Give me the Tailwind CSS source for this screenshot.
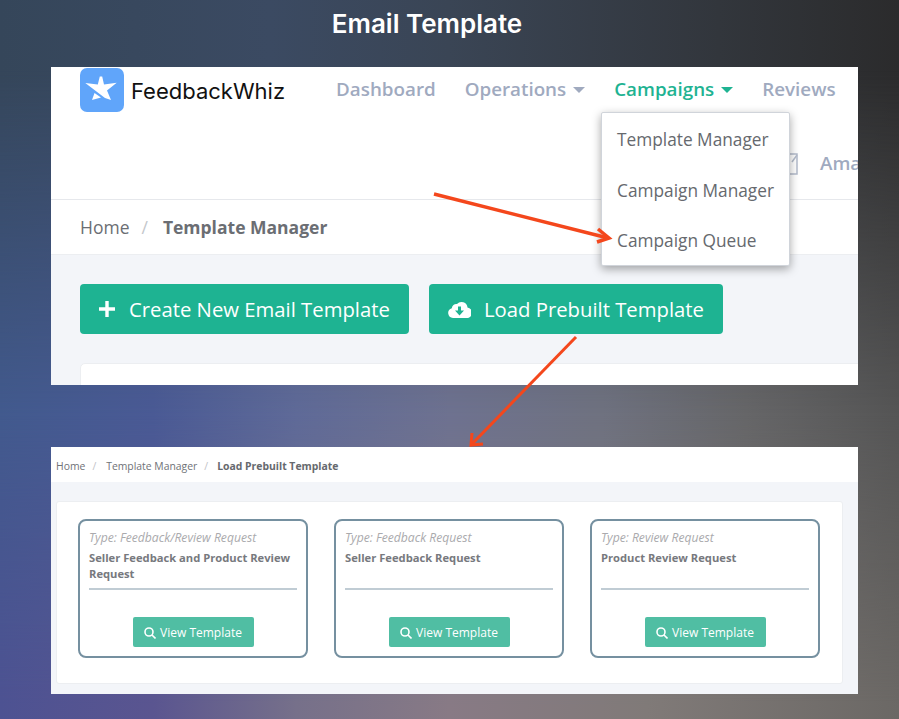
<!DOCTYPE html>
<html lang="en">
<head>
  <meta charset="UTF-8">
  <title>Email Template</title>
  <script src="https://cdn.jsdelivr.net/npm/@tailwindcss/browser@4"></script>
</head>
<body class="font-['Open_Sans',sans-serif]">
  <div class="relative w-[899px] h-[719px] overflow-hidden">
    <!-- slide background -->
    <div class="absolute inset-0 bg-[linear-gradient(90deg,#35465a_0%,#3b4a62_30%,#3a4555_50%,#32363c_80%,#2b2b2c_100%)]"></div>
    <div class="absolute inset-0 bg-[linear-gradient(90deg,#425a8e_0%,#4a5a95_17%,#5f6a98_33%,#6e7290_50%,#6f7280_67%,#666668_83%,#555555_100%)] [mask-image:linear-gradient(180deg,transparent_70px,#000_415px)]"></div>
    <div class="absolute inset-0 bg-[linear-gradient(90deg,#4d5292_0%,#5a5590_17%,#76708a_33%,#887a85_50%,#807a78_72%,#6b6865_100%)] [mask-image:linear-gradient(180deg,transparent_415px,#000_705px)]"></div>

    <div class="relative flex flex-col pl-[51px] w-[858px]">
      <h1 class="h-[67px] pb-[20px] pr-[55px] flex items-center justify-center font-['Inter',sans-serif] text-[26px] font-semibold text-white">Email Template</h1>

      <!-- first screenshot -->
      <div class="h-[318px] bg-white flex flex-col overflow-hidden">
        <div class="h-[133px] shrink-0 flex items-start pl-[29px] pt-[1px] border-b border-[#e6e8ec] relative">
          <div class="w-[44px] h-[44px] shrink-0 rounded-[7px] bg-[#60a5fa]">
            <svg width="44" height="44" viewBox="0 0 44 44" fill="#fff"><path d="M19.800 8.500L22.200 8.500L24 16.500L36.700 14.700L27 22.500L31 32L25 30L5.300 15L17.800 16.500Z"/><path d="M14.500 25L21 29.500L12 32Z"/></svg>
          </div>
          <span class="shrink-0 ml-[7px] mt-[8px] font-['Inter',sans-serif] text-[22px] leading-[30px] text-[#111]">FeedbackWhiz</span>
          <nav class="shrink-0 ml-[51px] mt-[8px] flex items-center text-[18.800px] leading-[27px] font-semibold text-[#a0aabf]">
            <span>Dashboard</span>
            <span class="ml-[29px]">Operations</span>
            <span class="ml-[7px] w-0 h-0 border-x-[6px] border-x-transparent border-t-[6px] border-t-[#a0aabf]"></span>
            <span class="ml-[29px] text-[#1fb392]">Campaigns</span>
            <span class="ml-[7px] w-0 h-0 border-x-[6px] border-x-transparent border-t-[6px] border-t-[#1fb392]"></span>
            <span class="ml-[29px]">Reviews</span>
          </nav>
          <span class="absolute left-[769px] top-[83px] text-[18.800px] leading-[27px] font-semibold text-[#a0aabf]">Ama</span>
          <svg class="absolute left-[737px] top-[86px]" width="10" height="22" viewBox="0 0 10 22" fill="none" stroke="#b4bccb" stroke-width="1.500"><path d="M0 1H9V21H0"/><path d="M9 2L4 9"/></svg>
          <!-- dropdown -->
          <div class="absolute z-10 left-[550px] top-[45px] w-[189px] h-[154px] bg-white border border-[#d0d4da] rounded-[2px] shadow-[0_3px_10px_rgba(0,0,0,0.35)] flex flex-col justify-between pl-[15px] pt-[12px] pb-[9px] text-[17.300px] leading-[30px] whitespace-nowrap text-[#66696e]">
            <span>Template Manager</span>
            <span>Campaign Manager</span>
            <span>Campaign Queue</span>
          </div>
        </div>
        <div class="h-[55px] shrink-0 flex items-center pl-[29px] border-b border-[#eceef1] text-[17.500px] text-[#6b6e73]">
          <span>Home</span>
          <span class="ml-[12px] text-[#c4c7cc]">/</span>
          <span class="ml-[15px] font-bold">Template Manager</span>
        </div>
        <div class="flex-1 bg-[#f3f5f9] pl-[29px] pt-[29px]">
          <div class="flex gap-[20px]">
            <div class="w-[329px] h-[50px] rounded-[4px] bg-[#1eb392] flex items-center pl-[19px] text-[20.300px] text-white">
              <svg width="16" height="16" viewBox="0 0 16 16"><path d="M6.300 0h3.400v6.300H16v3.400H9.700V16H6.300V9.700H0V6.300h6.300z" fill="#fff"/></svg>
              <span class="ml-[14px]">Create New Email Template</span>
            </div>
            <div class="w-[294px] h-[50px] rounded-[4px] bg-[#1eb392] flex items-center pl-[19px] text-[20.300px] text-white">
              <svg width="23" height="17" viewBox="0 0 23 17"><path d="M5 17a5 5 0 0 1-1.200-9.800A4.500 4.500 0 0 1 9 3 6 6 0 0 1 19.500 6.500 5.300 5.300 0 0 1 18 17z" fill="#fff"/><path d="M10 5.500h3v4h3l-4.500 5-4.500-5h3z" fill="#1eb392"/></svg>
              <span class="ml-[13px]">Load Prebuilt Template</span>
            </div>
          </div>
          <div class="mt-[29px] h-[40px] w-[800px] bg-white border border-[#eceef1] rounded-[5px]"></div>
        </div>
      </div>

      <!-- second screenshot -->
      <div class="mt-[62px] h-[247px] bg-white flex flex-col">
        <div class="h-[35px] pt-[4px] shrink-0 flex items-center pl-[5px] text-[10.400px] text-[#6f7277]">
          <span>Home</span>
          <span class="ml-[7px] text-[#bfc2c7]">/</span>
          <span class="ml-[10px]">Template Manager</span>
          <span class="ml-[7px] text-[#bfc2c7]">/</span>
          <span class="ml-[9px] font-bold text-[#66696e]">Load Prebuilt Template</span>
        </div>
        <div class="flex-1 bg-[#f3f5f9] pl-[5px] pt-[19px]">
          <div class="w-[787px] h-[183px] bg-white border border-[#eceef1] rounded-[3px] pl-[21px] pt-[17px] flex gap-[26px]">
            <div class="w-[230px] h-[139px] shrink-0 border-2 border-[#7590a0] rounded-[8px] px-[9px] flex flex-col">
              <p class="mt-[9px] text-[12.150px] leading-[16px] italic text-[#aaaaad] whitespace-nowrap">Type: Feedback/Review Request</p>
              <p class="mt-[4px] h-[38px] text-[11.200px] leading-[16px] font-bold text-[#77797e]">Seller Feedback and Product Review Request</p>
              <div class="h-[2px] bg-[#c0ccd4]"></div>
              <div class="mt-[27px] mx-auto w-[121px] h-[30px] pt-[1px] rounded-[2px] bg-[#50bea3] flex items-center justify-center gap-[4px] text-[12px] text-white">
                <svg width="12" height="12" viewBox="0 0 12 12" fill="none" stroke="#fff" stroke-width="1.600"><circle cx="5" cy="5" r="4"/><path d="M8 8l3.500 3.500"/></svg>
                <span>View Template</span>
              </div>
            </div>
            <div class="w-[230px] h-[139px] shrink-0 border-2 border-[#7590a0] rounded-[8px] px-[9px] flex flex-col">
              <p class="mt-[9px] text-[12.150px] leading-[16px] italic text-[#aaaaad] whitespace-nowrap">Type: Feedback Request</p>
              <p class="mt-[4px] h-[38px] text-[11.200px] leading-[16px] font-bold text-[#77797e]">Seller Feedback Request</p>
              <div class="h-[2px] bg-[#c0ccd4]"></div>
              <div class="mt-[27px] mx-auto w-[121px] h-[30px] pt-[1px] rounded-[2px] bg-[#50bea3] flex items-center justify-center gap-[4px] text-[12px] text-white">
                <svg width="12" height="12" viewBox="0 0 12 12" fill="none" stroke="#fff" stroke-width="1.600"><circle cx="5" cy="5" r="4"/><path d="M8 8l3.500 3.500"/></svg>
                <span>View Template</span>
              </div>
            </div>
            <div class="w-[230px] h-[139px] shrink-0 border-2 border-[#7590a0] rounded-[8px] px-[9px] flex flex-col">
              <p class="mt-[9px] text-[12.150px] leading-[16px] italic text-[#aaaaad] whitespace-nowrap">Type: Review Request</p>
              <p class="mt-[4px] h-[38px] text-[11.200px] leading-[16px] font-bold text-[#77797e]">Product Review Request</p>
              <div class="h-[2px] bg-[#c0ccd4]"></div>
              <div class="mt-[27px] mx-auto w-[121px] h-[30px] pt-[1px] rounded-[2px] bg-[#50bea3] flex items-center justify-center gap-[4px] text-[12px] text-white">
                <svg width="12" height="12" viewBox="0 0 12 12" fill="none" stroke="#fff" stroke-width="1.600"><circle cx="5" cy="5" r="4"/><path d="M8 8l3.500 3.500"/></svg>
                <span>View Template</span>
              </div>
            </div>
          </div>
        </div>
      </div>
    </div>

    <!-- annotation arrows -->
    <svg class="absolute inset-0 z-20 pointer-events-none" width="899" height="719" viewBox="0 0 899 719" fill="none" stroke="#f4471c" stroke-width="3.500">
      <path d="M434 194L608 238"/>
      <path d="M598 229L609 238L597 242"/>
      <path d="M576 337L472 444" stroke-width="3"/>
      <path d="M472 433L471 445L483 444" stroke-width="3"/>
    </svg>
  </div>
</body>
</html>
